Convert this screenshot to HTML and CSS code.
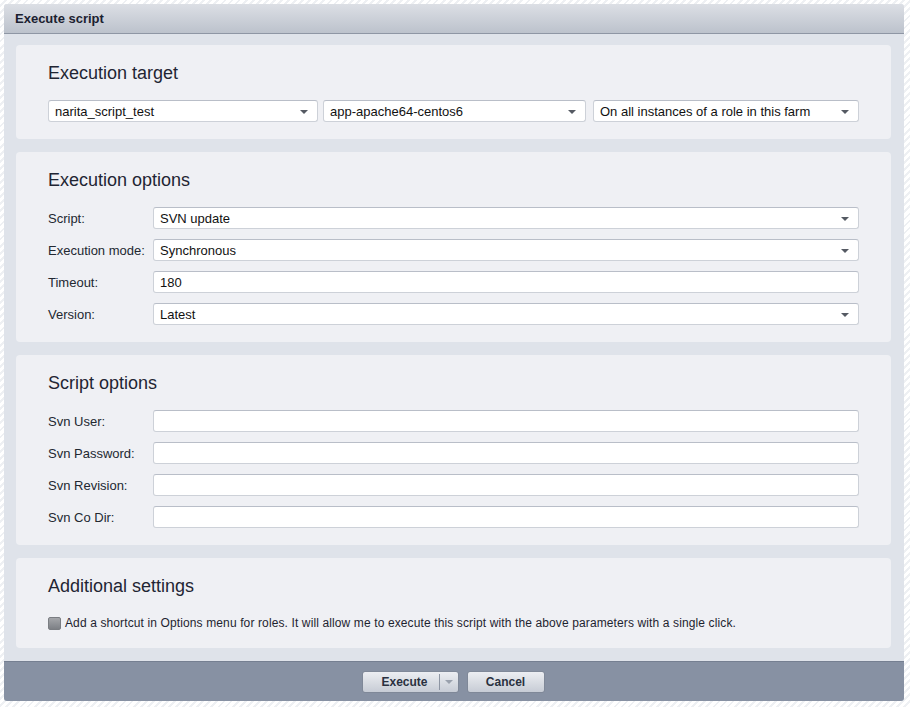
FILE: index.html
```html
<!DOCTYPE html>
<html>
<head>
<meta charset="utf-8">
<title>Execute script</title>
<link rel="stylesheet" href="styles.css">
</head>
<body>
<div class="dialog">
  <div class="dlg-header">Execute script</div>
  <div class="dlg-body">
    <section class="panel">
      <h2 class="panel-title">Execution target</h2>
      <div class="target-row">
        <div class="field select w1"><span>narita_script_test</span><i class="arrow"></i></div>
        <div class="field select w2"><span>app-apache64-centos6</span><i class="arrow"></i></div>
        <div class="field select w3"><span>On all instances of a role in this farm</span><i class="arrow"></i></div>
      </div>
    </section>

    <section class="panel">
      <h2 class="panel-title">Execution options</h2>
      <div class="form">
        <div class="row"><label>Script:</label><div class="field select"><span>SVN update</span><i class="arrow"></i></div></div>
        <div class="row"><label>Execution mode:</label><div class="field select"><span>Synchronous</span><i class="arrow"></i></div></div>
        <div class="row"><label>Timeout:</label><div class="field"><span>180</span></div></div>
        <div class="row"><label>Version:</label><div class="field select"><span>Latest</span><i class="arrow"></i></div></div>
      </div>
    </section>

    <section class="panel">
      <h2 class="panel-title">Script options</h2>
      <div class="form">
        <div class="row"><label>Svn User:</label><div class="field"></div></div>
        <div class="row"><label>Svn Password:</label><div class="field"></div></div>
        <div class="row"><label>Svn Revision:</label><div class="field"></div></div>
        <div class="row"><label>Svn Co Dir:</label><div class="field"></div></div>
      </div>
    </section>

    <section class="panel panel-last">
      <h2 class="panel-title">Additional settings</h2>
      <div class="check-row"><span class="checkbox"></span><span>Add a shortcut in Options menu for roles. It will allow me to execute this script with the above parameters with a single click.</span></div>
    </section>
  </div>
  <div class="dlg-footer">
    <div class="btn btn-split"><span class="btn-label">Execute</span><span class="btn-sep"></span><i class="btn-arrow"></i></div>
    <div class="btn btn-cancel"><span class="btn-label">Cancel</span></div>
  </div>
</div>
</body>
</html>
```
FILE: styles.css
```css
* { box-sizing: border-box; }
html, body { margin: 0; padding: 0; }
body {
  width: 910px;
  height: 707px;
  padding: 4px 6px 6px 4px;
  font-family: "Liberation Sans", Arial, sans-serif;
  color: #1e2430;
  background: repeating-linear-gradient(-45deg, #ffffff 0 3px, #eef0f3 3px 5px);
  overflow: hidden;
}
.dialog {
  width: 900px;
  height: 697px;
  display: flex;
  flex-direction: column;
  border-radius: 3px;
  overflow: hidden;
  background: #dfe3ea;
}
.dlg-header {
  height: 30px;
  flex: none;
  padding: 0 11px;
  display: flex;
  align-items: center;
  font-size: 13px;
  font-weight: bold;
  color: #1b2130;
  background: linear-gradient(#dcdfe5, #bcc2cc);
  border-bottom: 1px solid #8e96a4;
}
.dlg-body {
  flex: 1;
  padding: 11px 13px 13px 12px;
  display: flex;
  flex-direction: column;
  gap: 13px;
}
.panel {
  background: #eff0f4;
  border-radius: 4px;
  padding: 18px 32px 17px 32px;
}
.panel-last { padding-bottom: 15px; }
.panel-title {
  margin: 0 0 17px 0;
  font-size: 18px;
  line-height: 20px;
  font-weight: normal;
  color: #1f2533;
}
.target-row { display: flex; }
.w1 { width: 270px; margin-right: 5px; }
.w2 { width: 263px; margin-right: 7px; }
.w3 { width: 266px; }
.form { display: flex; flex-direction: column; gap: 10px; }
.row { display: flex; align-items: center; }
.row label {
  width: 105px;
  flex: none;
  font-size: 13px;
  color: #222831;
}
.row .field { flex: 1; }
.field {
  position: relative;
  height: 22px;
  background: #fff;
  border: 1px solid #cdd1d8;
  border-top-color: #b9bec8;
  border-radius: 3px;
  padding: 0 26px 0 6px;
  display: flex;
  align-items: center;
  font-size: 13px;
  color: #111;
  white-space: nowrap;
  overflow: hidden;
}
.arrow {
  position: absolute;
  right: 9px;
  top: 9px;
  width: 0;
  height: 0;
  border-left: 4px solid transparent;
  border-right: 4px solid transparent;
  border-top: 4px solid #555a63;
}
.check-row {
  display: flex;
  align-items: center;
  height: 20px;
  font-size: 12px;
  letter-spacing: 0.12px;
  color: #1e2430;
}
.checkbox {
  width: 13px;
  height: 13px;
  flex: none;
  margin-right: 4px;
  border-radius: 2px;
  border: 1px solid #7a7d82;
  background: linear-gradient(#a4a6aa, #7d8085);
}
.dlg-footer {
  height: 40px;
  flex: none;
  background: #8791a3;
  border-top: 1px solid #757f91;
  display: flex;
  justify-content: center;
  align-items: center;
  gap: 8px;
  padding-right: 2px;
}
.btn {
  height: 22px;
  border-radius: 3px;
  background: linear-gradient(#eceef2, #c7ccd5);
  border: 1px solid #7f8898;
  display: flex;
  align-items: center;
  justify-content: center;
  font-size: 12px;
  font-weight: bold;
  color: #2a3140;
  position: relative;
}
.btn-split { width: 97px; justify-content: flex-start; padding-left: 19px; }
.btn-cancel { width: 78px; }
.btn-sep {
  width: 1px;
  height: 16px;
  background: #8d95a3;
  margin-left: 11px;
}
.btn-arrow {
  margin-left: 5px;
  width: 0;
  height: 0;
  border-left: 4px solid transparent;
  border-right: 4px solid transparent;
  border-top: 4px solid #9aa1ad;
}
```
